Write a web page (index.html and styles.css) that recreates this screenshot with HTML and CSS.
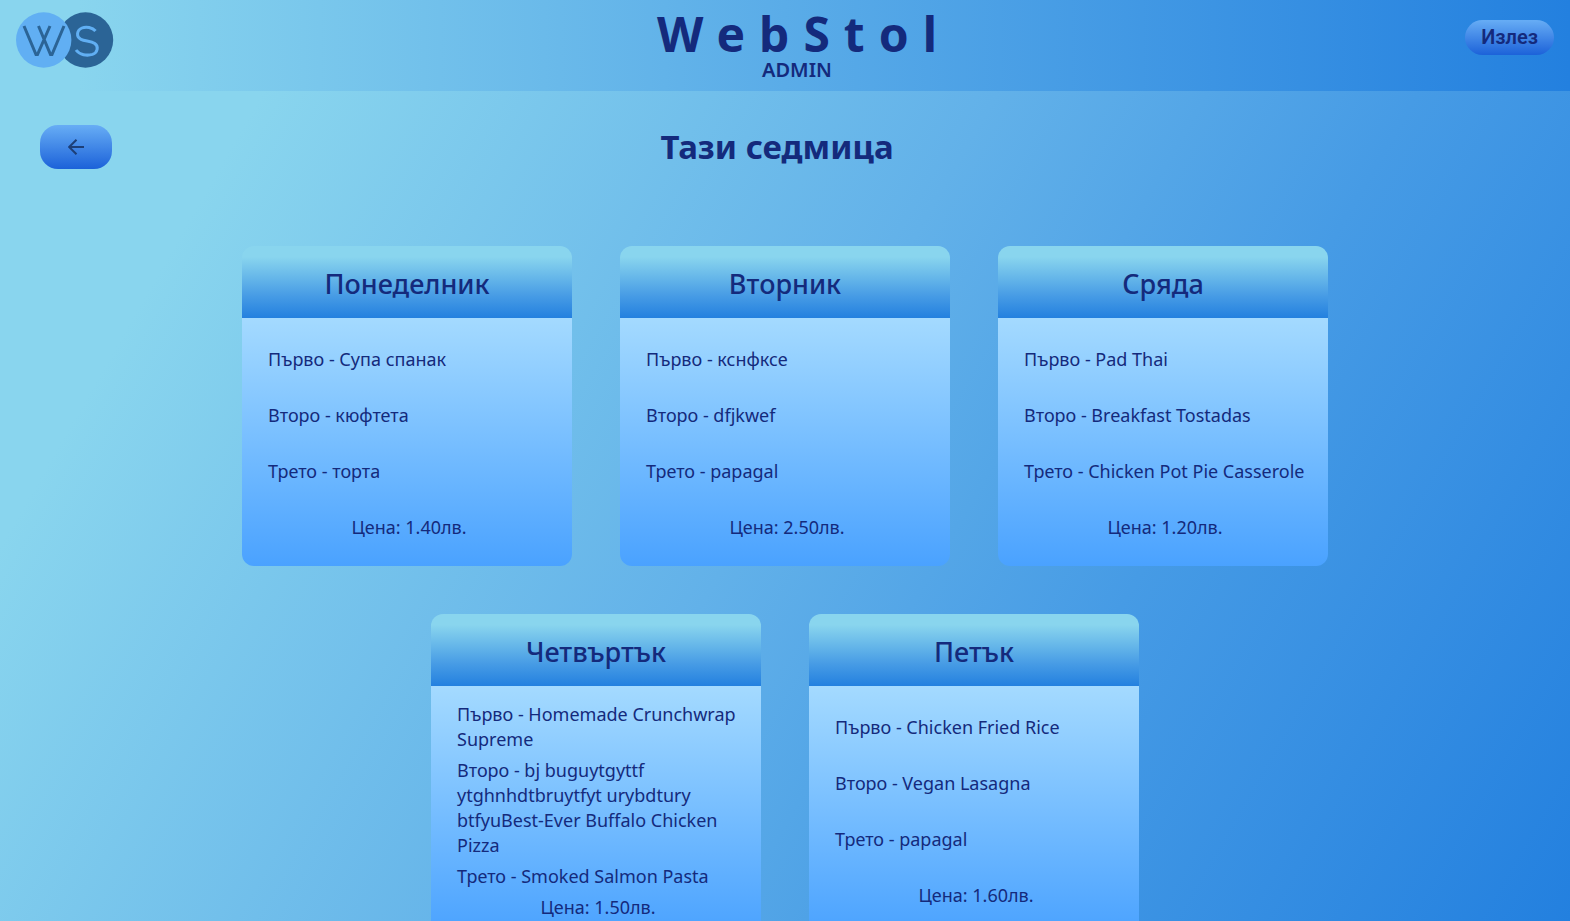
FILE: index.html
```html
<!DOCTYPE html>
<html lang="bg">
<head>
<meta charset="utf-8">
<meta name="viewport" content="width=device-width, initial-scale=1">
<title>WebStol</title>
<link rel="stylesheet" href="styles.css">
</head>
<body>
<header class="topbar">
  <a class="logo" href="#" aria-label="WebStol">
    <svg width="98" height="56" viewBox="0 0 98 56" aria-hidden="true">
      <circle cx="69.500" cy="28" r="27.700" fill="#2b6496"/>
      <circle cx="27.700" cy="28" r="27.700" fill="#61aff3"/>
      <path d="M8 14 L20 42.500 H21.500 L34 14 M22.500 14 L34.500 42.500 H36 L48 14" fill="none" stroke="#2b6496" stroke-width="3"/>
      <path d="M79.500 19 C76.500 15.400 70 14.200 66 16 C60.500 18.500 60 25 65 27.300 C69 29.200 75 29 78.800 31.500 C83 34.500 81.500 40.800 76.500 42.400 C71 44 63.500 43 60 38" fill="none" stroke="#61aff3" stroke-width="3"/>
    </svg>
  </a>
  <div class="brand">
    <h1 class="brand-name">WebStol</h1>
    <p class="brand-role">ADMIN</p>
  </div>
  <button class="exit" type="button">Излез</button>
</header>
<main>
  <div class="heading">
    <button class="back" type="button" aria-label="Назад">
      <svg width="16" height="16" viewBox="0 0 16 16" aria-hidden="true"><path d="M16 8 H1.500 M8.500 0.700 L1.200 8 L8.500 15.300" fill="none" stroke="#1d3f78" stroke-width="2"/></svg>
    </button>
    <h2 class="title">Тази седмица</h2>
  </div>
  <div class="week">
    <article class="card">
      <h3 class="day">Понеделник</h3>
      <div class="menu">
        <p class="dish">Първо - Супа спанак</p>
        <p class="dish">Второ - кюфтета</p>
        <p class="dish">Трето - торта</p>
        <p class="dish price">Цена: 1.40лв.</p>
      </div>
    </article>
    <article class="card">
      <h3 class="day">Вторник</h3>
      <div class="menu">
        <p class="dish">Първо - кснфксе</p>
        <p class="dish">Второ - dfjkwef</p>
        <p class="dish">Трето - papagal</p>
        <p class="dish price">Цена: 2.50лв.</p>
      </div>
    </article>
    <article class="card">
      <h3 class="day">Сряда</h3>
      <div class="menu">
        <p class="dish">Първо - Pad Thai</p>
        <p class="dish">Второ - Breakfast Tostadas</p>
        <p class="dish">Трето - Chicken Pot Pie Casserole</p>
        <p class="dish price">Цена: 1.20лв.</p>
      </div>
    </article>
    <article class="card">
      <h3 class="day">Четвъртък</h3>
      <div class="menu">
        <p class="dish">Първо - Homemade Crunchwrap Supreme</p>
        <p class="dish">Второ - bj buguytgyttf ytghnhdtbruytfyt urybdtury btfyuBest-Ever Buffalo Chicken Pizza</p>
        <p class="dish">Трето - Smoked Salmon Pasta</p>
        <p class="dish price">Цена: 1.50лв.</p>
      </div>
    </article>
    <article class="card">
      <h3 class="day">Петък</h3>
      <div class="menu">
        <p class="dish">Първо - Chicken Fried Rice</p>
        <p class="dish">Второ - Vegan Lasagna</p>
        <p class="dish">Трето - papagal</p>
        <p class="dish price">Цена: 1.60лв.</p>
      </div>
    </article>
  </div>
</main>
</body>
</html>
```
FILE: styles.css
```css
* {
  box-sizing: border-box;
  margin: 0;
}

html {
  scrollbar-width: none;
}

body {
  min-height: 100vh;
  font-family: "Noto Sans", "Open Sans", sans-serif;
  color: #142a7c;
  background: linear-gradient(120deg, #89d5ee 15%, #62b1e9 50%, #469be5 70%, #2380df 100%) fixed;
}

.topbar {
  display: grid;
  grid-template-columns: 1fr auto 1fr;
  align-items: start;
  padding: 12px 16px 7px;
  background: linear-gradient(90deg, #89d5ee 5%, #5aace8 50%, #2380df 100%);
}

.logo {
  display: block;
  justify-self: start;
  height: 56px;
}

.brand {
  padding-left: 24px;
  text-align: center;
}

.brand-name {
  margin-right: -14px;
  font-size: 48px;
  line-height: 44px;
  letter-spacing: 14px;
}

.brand-role {
  font-size: 20px;
  font-weight: 600;
  line-height: 28px;
}

.exit,
.back {
  border: 0;
  color: #142a7c;
  background: linear-gradient(#67adf5, #1c62d9);
  cursor: pointer;
}

.exit {
  justify-self: end;
  height: 35px;
  margin-top: 8px;
  padding: 0 16px;
  border-radius: 18px;
  font: 600 20px/35px Roboto, "Noto Sans", sans-serif;
}

.heading {
  display: grid;
  grid-template-columns: 1fr auto 1fr;
  align-items: center;
  padding: 32px 56px 0 40px;
}

.back {
  display: grid;
  place-items: center;
  width: 72px;
  height: 44px;
  border-radius: 18px;
}

.title {
  font-size: 33px;
  line-height: 48px;
}

.week {
  display: flex;
  flex-wrap: wrap;
  justify-content: center;
  gap: 48px;
  max-width: 1200px;
  margin: 0 auto;
  padding: 75px 24px 48px;
}

.card {
  display: flex;
  flex-direction: column;
  width: 330px;
  min-height: 320px;
  border-radius: 12px;
  overflow: hidden;
}

.day {
  padding: 18px 16px 14px;
  font-size: 27px;
  font-weight: 500;
  line-height: 40px;
  text-align: center;
  background: linear-gradient(#89d5ee 15%, #469be5 70%, #2380df 100%);
}

.menu {
  display: flex;
  flex: 1;
  flex-direction: column;
  gap: 6px;
  padding: 16px 22px 14px 26px;
  background: linear-gradient(#a4daff, #4aa2ff);
}

.dish {
  display: flex;
  flex: 1;
  align-items: center;
  font-size: 18px;
  line-height: 25px;
}

.price {
  justify-content: center;
}
```
